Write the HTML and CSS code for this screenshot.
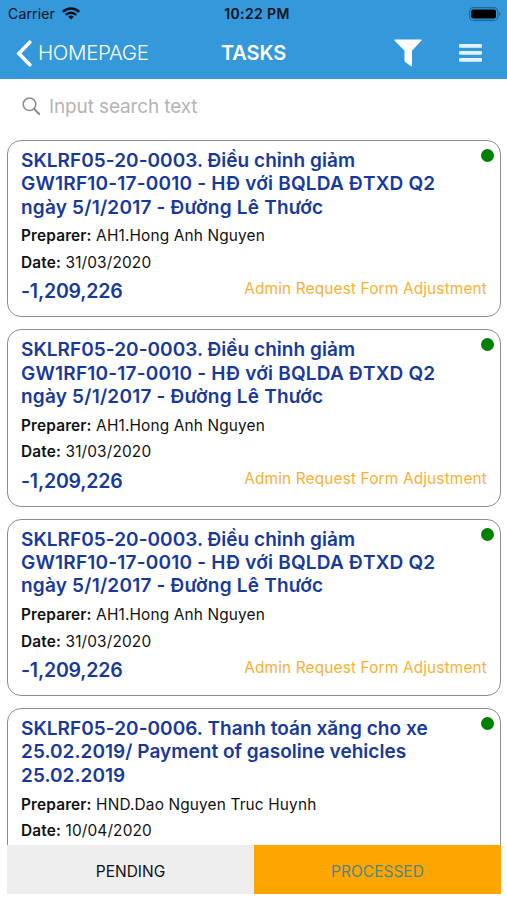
FILE: index.html
```
<!DOCTYPE html>
<html lang="vi">
<head>
    <meta charset="UTF-8">
    <meta name="viewport" content="width=device-width, initial-scale=1.0">
    <title>Tasks</title>
    <link rel="stylesheet" href="styles.css">
</head>
<body>
    <header class="header">
        <div class="status-bar">
            <div class="carrier">
                <span>Carrier</span>
                <svg width="18" height="13" viewBox="0 0 18 13" fill="none" stroke="#06121c" stroke-width="2.4">
                    <path d="M.9 4.8a11.5 11.5 0 0 1 16.2 0"/>
                    <path d="M3.8 7.9a7.3 7.3 0 0 1 10.4 0"/>
                    <path d="M9 12.5 6.2 9.8a4 4 0 0 1 5.6 0z" fill="#06121c" stroke="none"/>
                </svg>
            </div>
            <span class="clock">10:22 PM</span>
            <svg class="battery" width="32" height="14" viewBox="0 0 32 14">
                <rect x=".6" y=".6" width="28.3" height="12.8" rx="4" fill="none" stroke="#1f6696" stroke-width="1.1"/>
                <rect x="2.2" y="2.4" width="24.8" height="9.2" rx="2" fill="#000"/>
                <path d="M30.2 5v4c1.6-.7 1.6-3.3 0-4z" fill="#1f6696"/>
            </svg>
        </div>
        <nav class="nav">
            <a class="back">
                <svg width="16" height="27" viewBox="0 0 16 27" fill="none" stroke="#fff" stroke-width="3.6" stroke-linecap="round">
                    <path d="M13.8 2.2 2.9 13.5l10.9 11.2"/>
                </svg>
                <span class="back-text">HOMEPAGE</span>
            </a>
            <h1 class="title">TASKS</h1>
            <div class="actions">
                <svg width="28" height="28" viewBox="0 0 28 28" fill="#fff">
                    <path d="M.8.5h26.4q.8 0 .3 1L18 11.8v14.5q0 1.4-1.3.7l-5.500-4.100q-.7-.6-.7-1.500v-9.600L.5 1.500q-.5-1 .3-1z"/>
                </svg>
                <svg width="23" height="18" viewBox="0 0 23 18" fill="#e2f2fd">
                    <rect width="23" height="3.7" rx="1.3"/>
                    <rect y="7" width="23" height="3.7" rx="1.3"/>
                    <rect y="14" width="23" height="3.7" rx="1.3"/>
                </svg>
            </div>
        </nav>
    </header>

    <div class="search">
        <svg width="19" height="19" viewBox="0 0 19 19" fill="none" stroke="#8c8c8c" stroke-width="1.5" stroke-linecap="round">
            <circle cx="7.5" cy="7.3" r="6.3"/>
            <path d="m12.2 12 5 5" stroke-width="2"/>
        </svg>
        <span>Input search text</span>
    </div>

    <main class="list">
        <article class="card">
            <span class="dot"></span>
            <h2 class="card-title">SKLRF05-20-0003. Điều chỉnh giảm<br><span class="wide">GW1RF10-17-0010 - HĐ với BQLDA ĐTXD Q2<br>ngày 5/1/2017 - Đường Lê Thước</span></h2>
            <p class="row"><b>Preparer:</b> AH1.Hong Anh Nguyen</p>
            <p class="row"><b>Date:</b> 31/03/2020</p>
            <div class="card-foot">
                <span class="amount">-1,209,226</span>
                <span class="type">Admin Request Form Adjustment</span>
            </div>
        </article>
        <article class="card">
            <span class="dot"></span>
            <h2 class="card-title">SKLRF05-20-0003. Điều chỉnh giảm<br><span class="wide">GW1RF10-17-0010 - HĐ với BQLDA ĐTXD Q2<br>ngày 5/1/2017 - Đường Lê Thước</span></h2>
            <p class="row"><b>Preparer:</b> AH1.Hong Anh Nguyen</p>
            <p class="row"><b>Date:</b> 31/03/2020</p>
            <div class="card-foot">
                <span class="amount">-1,209,226</span>
                <span class="type">Admin Request Form Adjustment</span>
            </div>
        </article>
        <article class="card">
            <span class="dot"></span>
            <h2 class="card-title">SKLRF05-20-0003. Điều chỉnh giảm<br><span class="wide">GW1RF10-17-0010 - HĐ với BQLDA ĐTXD Q2<br>ngày 5/1/2017 - Đường Lê Thước</span></h2>
            <p class="row"><b>Preparer:</b> AH1.Hong Anh Nguyen</p>
            <p class="row"><b>Date:</b> 31/03/2020</p>
            <div class="card-foot">
                <span class="amount">-1,209,226</span>
                <span class="type">Admin Request Form Adjustment</span>
            </div>
        </article>
        <article class="card">
            <span class="dot"></span>
            <h2 class="card-title">SKLRF05-20-0006. Thanh toán xăng cho xe<br>25.02.2019/ Payment of gasoline vehicles<br>25.02.2019</h2>
            <p class="row"><b>Preparer:</b> HND.Dao Nguyen Truc Huynh</p>
            <p class="row"><b>Date:</b> 10/04/2020</p>
        </article>
    </main>

    <footer class="tabs">
        <div class="tab">PENDING</div>
        <div class="tab active">PROCESSED</div>
    </footer>
</body>
</html>
```
FILE: styles.css
```
* {
    box-sizing: border-box;
}
body {
    margin: 0;
    height: 900px;
    display: flex;
    flex-direction: column;
    overflow: hidden;
    background: #fff;
    color: #111;
    font-family: Inter, "Liberation Sans", sans-serif;
}
.header {
    flex: none;
    height: 79px;
    background: #3498db;
}
.status-bar {
    display: grid;
    grid-template-columns: 1fr auto 1fr;
    align-items: center;
    height: 27px;
    padding: 0 6px 0 8px;
    color: #06121c;
    font-size: 14px;
    letter-spacing: 0.15px;
}
.carrier {
    display: flex;
    align-items: center;
    gap: 7px;
}
.clock {
    margin-left: 5px;
    font-size: 14px;
    font-weight: 600;
    letter-spacing: 0.4px;
}
.battery {
    justify-self: end;
}
.nav {
    display: grid;
    grid-template-columns: 1fr auto 1fr;
    align-items: center;
    height: 52px;
    padding: 0 25px 0 16px;
    color: #fff;
}
.back {
    display: flex;
    align-items: center;
    gap: 6px;
    font-size: 20.5px;
    font-weight: 300;
    letter-spacing: -0.35px;
}
.back-text {
    padding-bottom: 2px;
}
.title {
    margin: 0 0 0 9px;
    font-size: 20px;
    font-weight: 600;
    letter-spacing: -0.1px;
}
.actions {
    display: flex;
    justify-content: flex-end;
    align-items: center;
    gap: 37px;
}
.search {
    flex: none;
    display: flex;
    align-items: center;
    gap: 8px;
    height: 53px;
    padding: 1px 0 0 22px;
    color: #b4b4b4;
    font-size: 19px;
    letter-spacing: -0.13px;
}
.list {
    flex: 1;
    min-height: 0;
    overflow: hidden;
    padding: 8px 6px 0 7px;
}
.card {
    position: relative;
    height: 177.4px;
    margin-bottom: 12px;
    padding: 8px 13px 0;
    border: 1px solid #8d8d8d;
    border-radius: 14px;
}
.dot {
    position: absolute;
    top: 8px;
    right: 6px;
    width: 13px;
    height: 13px;
    border-radius: 50%;
    background: #008000;
}
.card-title {
    margin: 0 0 2.5px;
    color: #18399c;
    font-size: 19px;
    font-weight: 600;
    line-height: 23.3px;
    letter-spacing: 0.04px;
    white-space: nowrap;
}
.wide {
    letter-spacing: 0.21px;
}
.row {
    margin: 0;
    padding-top: 4px;
    font-size: 15.4px;
    line-height: 22.4px;
    letter-spacing: 0.15px;
}
.row b {
    font-weight: 600;
}
.card-foot {
    display: flex;
    justify-content: space-between;
    align-items: flex-start;
    padding-top: 5px;
}
.amount {
    color: #18399c;
    font-size: 19.5px;
    font-weight: 600;
    line-height: 24px;
    letter-spacing: -0.2px;
}
.type {
    color: #f9af35;
    font-size: 15.4px;
    line-height: 20px;
    letter-spacing: 0.15px;
}
.tabs {
    flex: none;
    display: flex;
    height: 49px;
    margin: 0 6px 6px 7px;
}
.tab {
    flex: 1;
    display: flex;
    align-items: center;
    justify-content: center;
    padding-top: 4px;
    background: #eee;
    font-size: 15.5px;
}
.tab.active {
    background: #ffa500;
    color: #4e8a83;
}
```
